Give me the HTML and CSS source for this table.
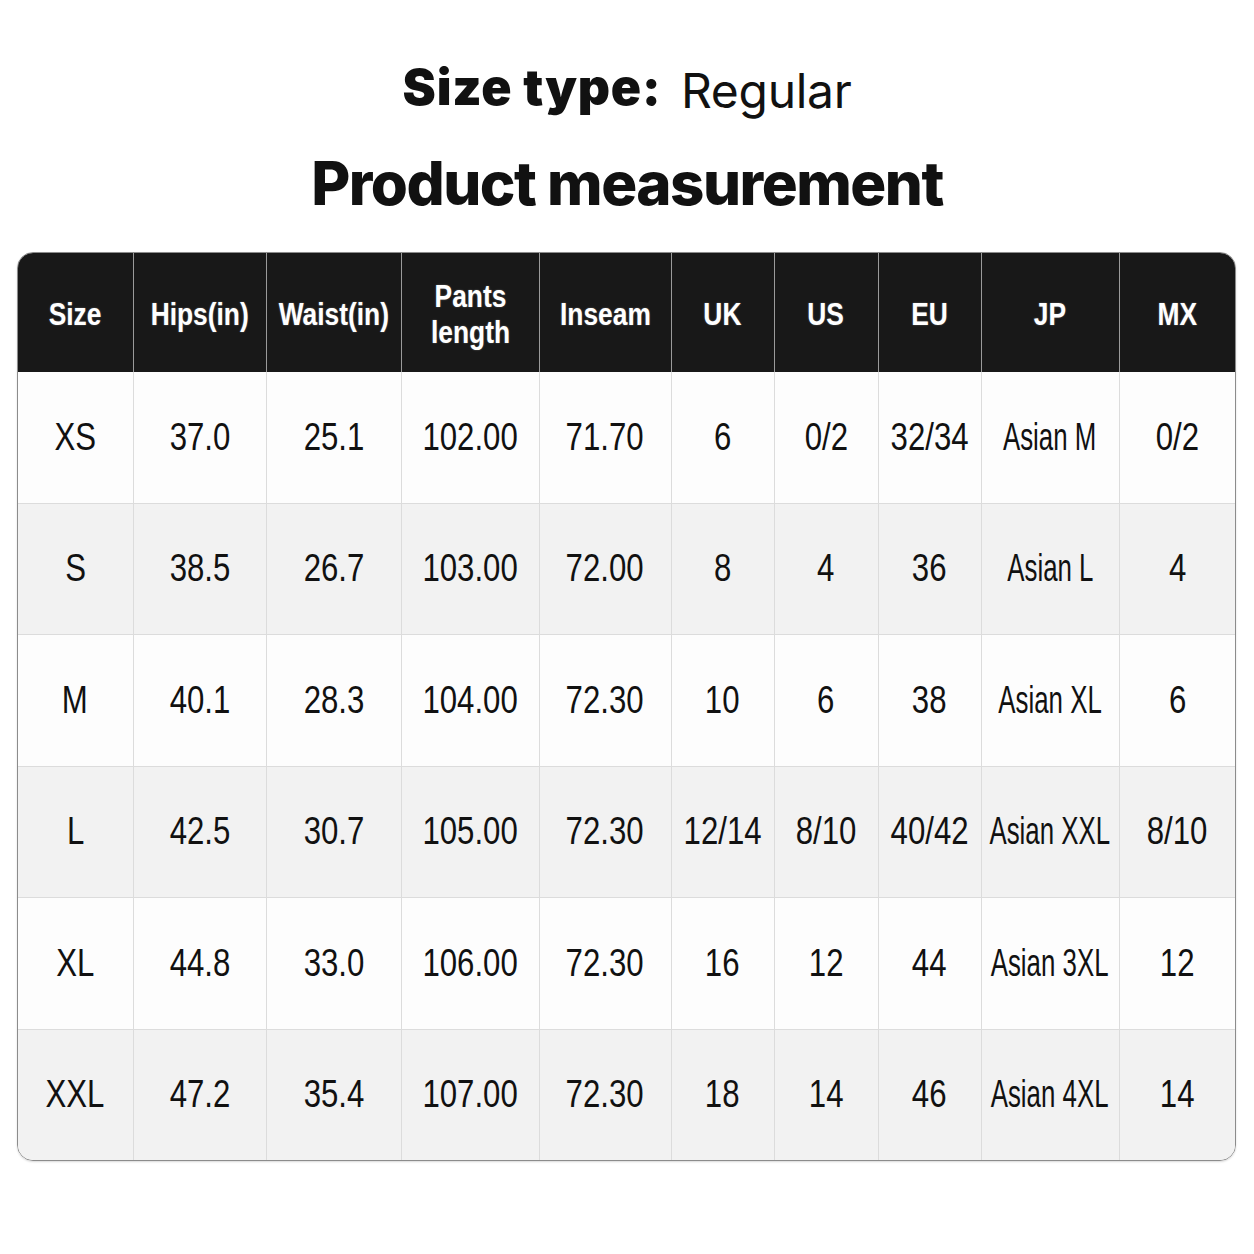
FILE: index.html
```html
<!DOCTYPE html>
<html>
<head>
<meta charset="utf-8">
<link rel="stylesheet" href="styles.css">
</head>
<body>
<div class="page">
  <h2 class="size-type"><span class="label">Size type:</span> <span class="value">Regular</span></h2>
  <h1 class="title">Product measurement</h1>
  <div class="table-wrap">
    <table class="chart">
      <colgroup>
        <col style="width:115px"><col style="width:133px"><col style="width:135px"><col style="width:138px"><col style="width:132px"><col style="width:103px"><col style="width:104px"><col style="width:103px"><col style="width:138px"><col style="width:116px">
      </colgroup>
      <thead>
        <tr>
          <th><span class="h">Size</span></th>
          <th><span class="h">Hips(in)</span></th>
          <th><span class="h">Waist(in)</span></th>
          <th><span class="h">Pants<br>length</span></th>
          <th><span class="h">Inseam</span></th>
          <th><span class="h">UK</span></th>
          <th><span class="h">US</span></th>
          <th><span class="h">EU</span></th>
          <th><span class="h">JP</span></th>
          <th><span class="h">MX</span></th>
        </tr>
      </thead>
      <tbody>
        <tr><td><span class="v">XS</span></td><td><span class="v">37.0</span></td><td><span class="v">25.1</span></td><td><span class="v">102.00</span></td><td><span class="v">71.70</span></td><td><span class="v">6</span></td><td><span class="v">0/2</span></td><td><span class="v">32/34</span></td><td><span class="v jp">Asian M</span></td><td><span class="v">0/2</span></td></tr>
        <tr><td><span class="v">S</span></td><td><span class="v">38.5</span></td><td><span class="v">26.7</span></td><td><span class="v">103.00</span></td><td><span class="v">72.00</span></td><td><span class="v">8</span></td><td><span class="v">4</span></td><td><span class="v">36</span></td><td><span class="v jp">Asian L</span></td><td><span class="v">4</span></td></tr>
        <tr><td><span class="v">M</span></td><td><span class="v">40.1</span></td><td><span class="v">28.3</span></td><td><span class="v">104.00</span></td><td><span class="v">72.30</span></td><td><span class="v">10</span></td><td><span class="v">6</span></td><td><span class="v">38</span></td><td><span class="v jp">Asian XL</span></td><td><span class="v">6</span></td></tr>
        <tr><td><span class="v">L</span></td><td><span class="v">42.5</span></td><td><span class="v">30.7</span></td><td><span class="v">105.00</span></td><td><span class="v">72.30</span></td><td><span class="v">12/14</span></td><td><span class="v">8/10</span></td><td><span class="v">40/42</span></td><td><span class="v jp">Asian XXL</span></td><td><span class="v">8/10</span></td></tr>
        <tr><td><span class="v">XL</span></td><td><span class="v">44.8</span></td><td><span class="v">33.0</span></td><td><span class="v">106.00</span></td><td><span class="v">72.30</span></td><td><span class="v">16</span></td><td><span class="v">12</span></td><td><span class="v">44</span></td><td><span class="v jp">Asian 3XL</span></td><td><span class="v">12</span></td></tr>
        <tr><td><span class="v">XXL</span></td><td><span class="v">47.2</span></td><td><span class="v">35.4</span></td><td><span class="v">107.00</span></td><td><span class="v">72.30</span></td><td><span class="v">18</span></td><td><span class="v">14</span></td><td><span class="v">46</span></td><td><span class="v jp">Asian 4XL</span></td><td><span class="v">14</span></td></tr>
      </tbody>
    </table>
  </div>
</div>
</body>
</html>
```
FILE: styles.css
```css
html, body {
  margin: 0;
  padding: 0;
  background: #ffffff;
}
.page {
  width: 1254px;
  height: 1254px;
  display: flex;
  flex-direction: column;
  align-items: center;
  padding-top: 57px;
  box-sizing: border-box;
  font-family: "Inter", "Liberation Sans", sans-serif;
  color: #111;
}
.size-type {
  margin: 0;
  height: 60px;
  font-size: 48px;
  line-height: 60px;
  font-weight: 400;
}
.size-type .label {
  font-size: 50px;
  font-weight: 900;
  letter-spacing: 0.8px;
  margin-right: 6px;
  vertical-align: 3px;
}
.size-type .value {
  font-weight: 400;
  letter-spacing: -0.3px;
}
.title {
  margin: 31px 0 0 0;
  font-size: 60px;
  line-height: 70px;
  font-weight: 800;
  letter-spacing: -1.5px;
}
.table-wrap {
  margin-top: 34px;
  align-self: flex-start;
  margin-left: 17px;
  width: 1219px;
  border: 1px solid #8c8c8c;
  border-radius: 16px;
  overflow: hidden;
  box-sizing: border-box;
  box-shadow: 0 1px 2px rgba(0,0,0,0.15);
}
.chart {
  width: 100%;
  table-layout: fixed;
  border-collapse: collapse;
}
.chart th {
  height: 114px;
  background: #181818;
  color: #fff;
  font-family: "Liberation Sans", Arial, sans-serif;
  font-weight: 700;
  font-size: 31px;
  line-height: 36px;
  text-align: center;
  padding: 5px 0 0 0;
  border-left: 1px solid #9a9a9a;
  white-space: nowrap;
}
.h {
  display: inline-block;
  transform: scaleX(0.85);
  text-shadow: 0 0 2px rgba(255,255,255,0.35);
  margin: 0 -30px;
}
.chart th:first-child,
.chart td:first-child {
  border-left: none;
}
.chart td {
  height: 130.5px;
  text-align: center;
  padding: 0;
  font-family: "Liberation Sans", Arial, sans-serif;
  font-size: 38px;
  color: #111;
  border-left: 1px solid #dcdcdc;
  border-top: 1px solid #dcdcdc;
  white-space: nowrap;
}
.v {
  display: inline-block;
  transform: scaleX(0.82);
  margin: 0 -40px;
}
.v.jp {
  transform: scaleX(0.68);
}
.chart tbody tr:nth-child(odd) td {
  background: #fdfdfd;
}
.chart tbody tr:nth-child(even) td {
  background: #f2f2f2;
}
.chart tbody tr:first-child td {
  border-top: none;
}
```
